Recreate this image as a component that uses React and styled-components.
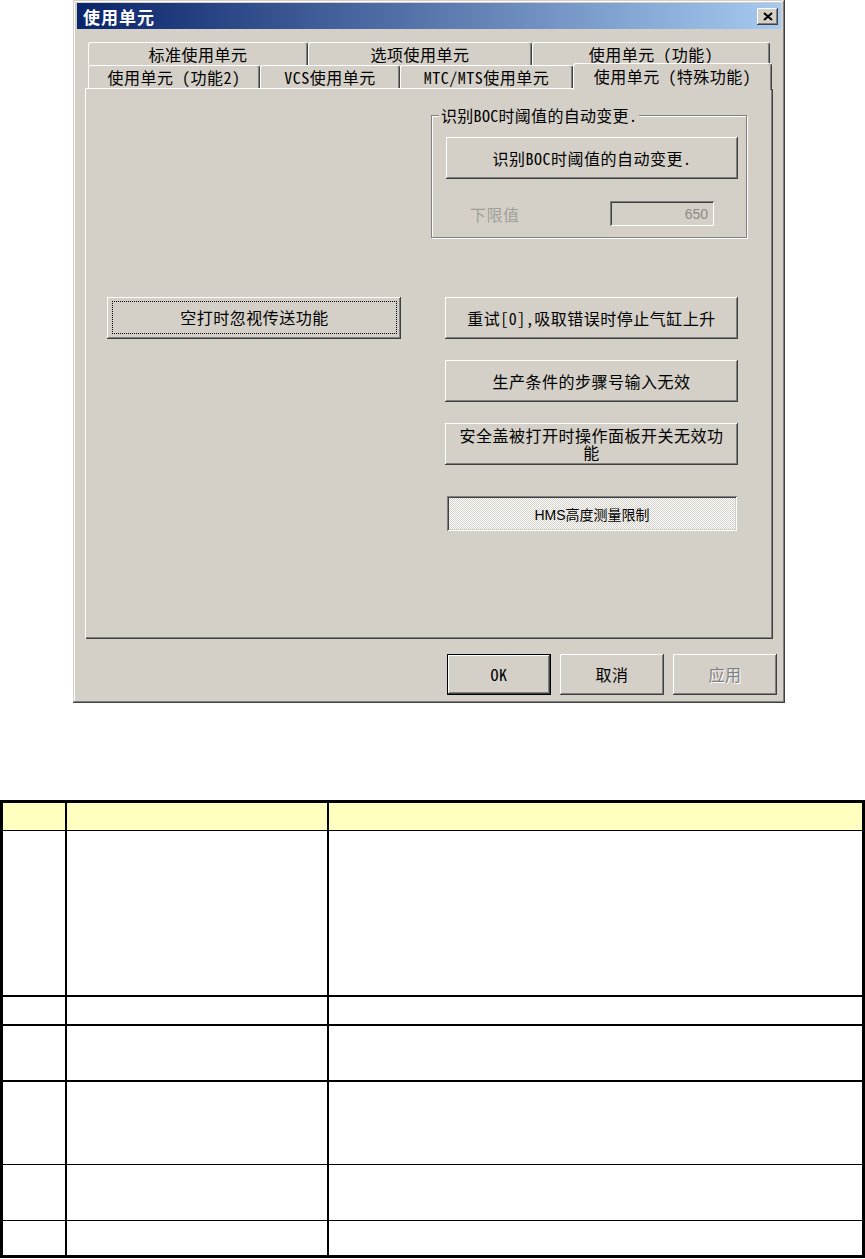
import React from "react";
import styled, { createGlobalStyle } from "styled-components";

const ui = `"Noto Sans Mono CJK SC", "Noto Sans CJK SC", sans-serif`;

const raised =
  "inset -1px -1px #404040, inset 1px 1px #ffffff, inset -2px -2px #808080, inset 2px 2px #d4d0c8";
const sunken =
  "inset 1px 1px #808080, inset -1px -1px #ffffff, inset 2px 2px #404040, inset -2px -2px #d4d0c8";
const defaultRaised =
  "inset 0 0 0 1px #000000, inset -2px -2px #404040, inset 2px 2px #ffffff, inset -3px -3px #808080";

const GlobalStyle = createGlobalStyle`
  body {
    margin: 0;
    background: #ffffff;
    font-family: ${ui};
  }
`;

const backTabs = [
  { label: "标准使用单元", w: 220 },
  { label: "选项使用单元", w: 224 },
  { label: "使用单元 (功能)", w: 238 },
];

const frontTabs = [
  { label: "使用单元 (功能2)", w: 172 },
  { label: "VCS使用单元", w: 140 },
  { label: "MTC/MTS使用单元", w: 173 },
  { label: "使用单元 (特殊功能)", w: 199, active: true },
];

const rows = [
  { h: 27, b: 1, head: true },
  { h: 164, b: 2 },
  { h: 27, b: 2 },
  { h: 54, b: 2 },
  { h: 82, b: 1 },
  { h: 55, b: 1 },
  { h: 34, b: 0 },
];

const CloseIcon = () => (
  <svg width="10" height="9" viewBox="0 0 10 9">
    <path d="M1 1 L9 8 M9 1 L1 8" stroke="#000" strokeWidth="2" fill="none" />
  </svg>
);

const App = () => {
  return (
    <Page>
      <GlobalStyle />
      <Dialog>
        <TitleBar>
          <Title>使用单元</Title>
          <CloseButton>
            <CloseIcon />
          </CloseButton>
        </TitleBar>

        <Sheet>
          <TabStrip>
            <TabRow>
              {backTabs.map((t) => (
                <Tab key={t.label} $w={t.w}>
                  {t.label}
                </Tab>
              ))}
            </TabRow>
            <TabRow>
              {frontTabs.map((t) => (
                <Tab key={t.label} $w={t.w} $active={t.active}>
                  {t.label}
                </Tab>
              ))}
            </TabRow>
          </TabStrip>

          <Panel>
            <LeftCol>
              <PushButton $w={294} $focused>
                <FocusRing>空打时忽视传送功能</FocusRing>
              </PushButton>
            </LeftCol>

            <RightCol>
              <GroupBox>
                <GroupCaption>识别BOC时阈值的自动变更.</GroupCaption>
                <PushButton $w={292}>识别BOC时阈值的自动变更.</PushButton>
                <FieldRow>
                  <DimLabel>下限值</DimLabel>
                  <Edit>650</Edit>
                </FieldRow>
              </GroupBox>

              <ButtonStack>
                <PushButton>重试[0],吸取错误时停止气缸上升</PushButton>
                <PushButton>生产条件的步骤号输入无效</PushButton>
                <PushButton>安全盖被打开时操作面板开关无效功能</PushButton>
                <ToggleButton>HMS高度测量限制</ToggleButton>
              </ButtonStack>
            </RightCol>
          </Panel>
        </Sheet>

        <Footer>
          <PushButton $w={104} $h={41} $default>
            OK
          </PushButton>
          <PushButton $w={104} $h={41}>
            取消
          </PushButton>
          <PushButton $w={104} $h={41} disabled>
            应用
          </PushButton>
        </Footer>
      </Dialog>

      <Grid>
        <colgroup>
          <col style={{ width: 62 }} />
          <col style={{ width: 262 }} />
          <col />
        </colgroup>
        <tbody>
          {rows.map((r, i) => (
            <tr key={i}>
              {[0, 1, 2].map((c) => (
                <Cell key={c} $h={r.h} $b={r.b} $head={r.head} $first={c === 0} />
              ))}
            </tr>
          ))}
        </tbody>
      </Grid>
    </Page>
  );
};

const Page = styled.div`
  width: 865px;
  height: 1259px;
  overflow: hidden;
`;

const Dialog = styled.div`
  box-sizing: border-box;
  width: 712px;
  height: 703px;
  margin-left: 73px;
  padding: 3px 4px 8px;
  background: #d4d0c8;
  box-shadow: inset -1px -1px #404040, inset 1px 1px #d4d0c8,
    inset -2px -2px #808080, inset 2px 2px #ffffff;
  display: flex;
  flex-direction: column;
`;

const TitleBar = styled.div`
  height: 26px;
  flex-shrink: 0;
  display: flex;
  align-items: center;
  justify-content: space-between;
  padding: 0 3px 0 6px;
  background: linear-gradient(to right, #0a246a, #a6caf0);
`;

const Title = styled.span`
  color: #ffffff;
  font-family: "Noto Sans CJK SC", sans-serif;
  font-weight: bold;
  font-size: 17px;
  letter-spacing: 1px;
`;

const CloseButton = styled.div`
  width: 21px;
  height: 17px;
  background: #d4d0c8;
  box-shadow: ${raised};
  display: flex;
  align-items: center;
  justify-content: center;
`;

const Sheet = styled.div`
  margin-top: 13px;
  padding: 0 8px;
`;

const TabStrip = styled.div`
  padding-left: 3px;
`;

const TabRow = styled.div`
  display: flex;
  align-items: flex-end;
  height: 23px;
`;

const Tab = styled.div`
  box-sizing: border-box;
  flex-shrink: 0;
  width: ${(p) => p.$w}px;
  height: ${(p) => (p.$active ? 27 : 23)}px;
  margin-bottom: ${(p) => (p.$active ? -2 : 0)}px;
  padding-bottom: ${(p) => (p.$active ? 3 : 0)}px;
  position: ${(p) => (p.$active ? "relative" : "static")};
  z-index: ${(p) => (p.$active ? 2 : "auto")};
  background: #d4d0c8;
  border-top: 1px solid #ffffff;
  border-left: 1px solid #ffffff;
  border-right: 1px solid #404040;
  border-radius: 3px 3px 0 0;
  box-shadow: inset -1px 0 #808080;
  display: flex;
  align-items: center;
  justify-content: center;
  font-size: 16px;
  letter-spacing: 0.5px;
  white-space: nowrap;
  color: #000000;
`;

const Panel = styled.div`
  box-sizing: border-box;
  height: 551px;
  padding: 27px 26px 0 22px;
  display: flex;
  justify-content: space-between;
  align-items: flex-start;
  box-shadow: inset 1px 1px #ffffff, inset -1px -1px #404040,
    inset -2px -2px #808080;
`;

const LeftCol = styled.div`
  padding-top: 182px;
`;

const RightCol = styled.div`
  width: 316px;
`;

const GroupBox = styled.div`
  position: relative;
  box-sizing: border-box;
  height: 123px;
  padding: 21px 8px 0 14px;
  border: 1px solid #808080;
  box-shadow: inset 1px 1px #ffffff, 1px 1px #ffffff;
`;

const GroupCaption = styled.span`
  position: absolute;
  top: -10px;
  left: 7px;
  padding: 0 2px;
  background: #d4d0c8;
  font-size: 16px;
  line-height: 18px;
  letter-spacing: 0.3px;
  white-space: nowrap;
`;

const FieldRow = styled.div`
  margin-top: 22px;
  height: 25px;
  display: flex;
  align-items: center;
  justify-content: space-between;
  padding: 0 24px;
`;

const DimLabel = styled.span`
  font-size: 16px;
  letter-spacing: 0.5px;
  color: #a09e98;
`;

const Edit = styled.div`
  box-sizing: border-box;
  width: 104px;
  height: 25px;
  padding: 0 6px;
  display: flex;
  align-items: center;
  justify-content: flex-end;
  background: #d4d0c8;
  box-shadow: ${sunken};
  font-family: "Liberation Sans", sans-serif;
  font-size: 14px;
  color: #8c8a86;
`;

const ButtonStack = styled.div`
  margin: 59px 0 0 14px;
  display: flex;
  flex-direction: column;
  gap: 21px;
`;

const PushButton = styled.button`
  box-sizing: border-box;
  flex-shrink: 0;
  width: ${(p) => p.$w || 293}px;
  height: ${(p) => p.$h || 42}px;
  margin: 0;
  padding: ${(p) => (p.$focused ? "4px 4px 5px 5px" : "0 8px")};
  border: none;
  border-radius: 0;
  background: #d4d0c8;
  color: ${(p) => (p.disabled ? "#808080" : "#000000")};
  text-shadow: ${(p) => (p.disabled ? "1px 1px 0 #ffffff" : "none")};
  box-shadow: ${(p) => (p.$default ? defaultRaised : raised)};
  font-family: ${ui};
  font-size: 16px;
  line-height: 17px;
  letter-spacing: 0.5px;
  text-align: center;
  display: flex;
  align-items: center;
  justify-content: center;
`;

const FocusRing = styled.span`
  box-sizing: border-box;
  width: 100%;
  height: 100%;
  border: 1px dotted #000000;
  display: flex;
  align-items: center;
  justify-content: center;
`;

const ToggleButton = styled.div`
  box-sizing: border-box;
  width: 290px;
  height: 35px;
  margin: 10px 0 0 2px;
  background-color: #ffffff;
  background-image: repeating-conic-gradient(#d4d0c8 0 25%, #ffffff 0 50%);
  background-size: 2px 2px;
  box-shadow: ${sunken};
  display: flex;
  align-items: center;
  justify-content: center;
  font-family: "Liberation Sans", "Noto Sans CJK SC", sans-serif;
  font-size: 14px;
  color: #000000;
`;

const Footer = styled.div`
  margin-top: 15px;
  padding-right: 4px;
  display: flex;
  justify-content: flex-end;
  gap: 9px;
`;

const Grid = styled.table`
  box-sizing: border-box;
  margin-top: 97px;
  width: 865px;
  table-layout: fixed;
  border-collapse: separate;
  border-spacing: 0;
  border: 3px solid #000000;
`;

const Cell = styled.td`
  box-sizing: border-box;
  height: ${(p) => p.$h + p.$b}px;
  padding: 0;
  background: ${(p) => (p.$head ? "#ffffc0" : "#ffffff")};
  border-left: ${(p) => (p.$first ? "none" : "2px solid #000000")};
  border-bottom: ${(p) => p.$b}px solid #000000;
`;

export default App;
